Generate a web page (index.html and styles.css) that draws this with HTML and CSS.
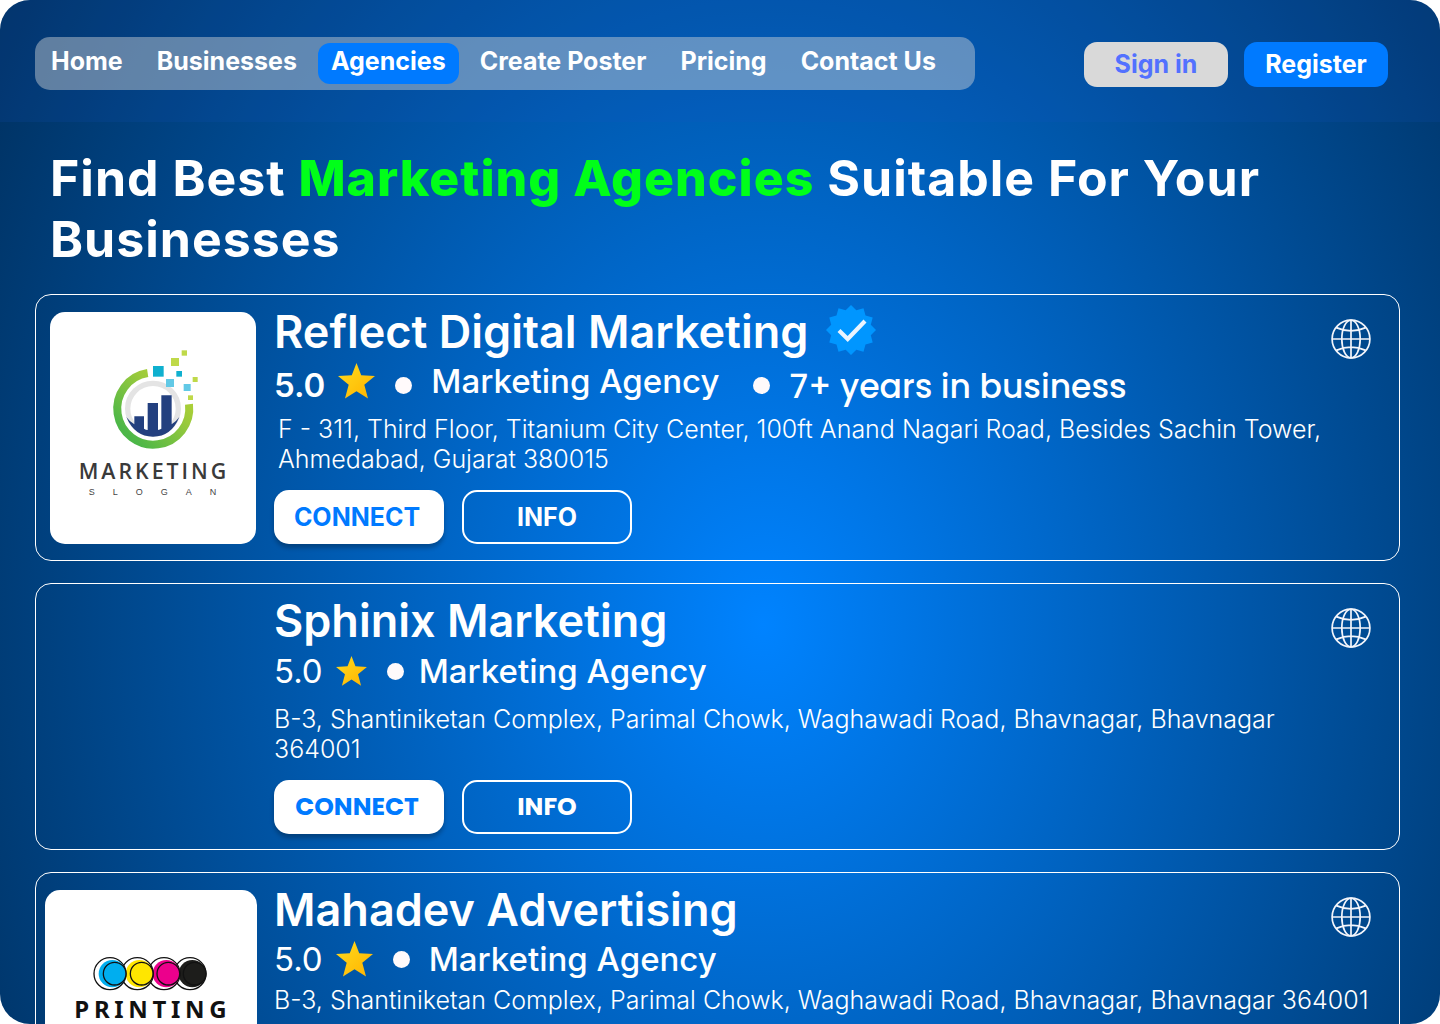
FILE: index.html
```html
<!DOCTYPE html>
<html lang="en">
<head>
<meta charset="utf-8">
<meta name="viewport" content="width=device-width, initial-scale=1">
<title>Marketing Agencies</title>
<link rel="stylesheet" href="styles.css">
</head>
<body>
<svg class="defs" aria-hidden="true">
  <defs>
    <linearGradient id="gold" x1="0" y1="0" x2="1" y2="1">
      <stop offset="0" stop-color="#ffdc1e"/>
      <stop offset="1" stop-color="#ffb200"/>
    </linearGradient>
    <linearGradient id="lime" x1="0.2" y1="0.9" x2="0.9" y2="0.2">
      <stop offset="0" stop-color="#4db748"/>
      <stop offset="0.7" stop-color="#9bca3c"/>
      <stop offset="1" stop-color="#b0d136"/>
    </linearGradient>
    <symbol id="star" viewBox="0 0 36 35">
      <path d="M18 0L22.6 12L36 12.7L25.6 21.2L29.2 34.6L18 27.4L6.8 34.6L10.4 21.2L0 12.7L13.4 12Z" fill="url(#gold)"/>
    </symbol>
    <symbol id="globe" viewBox="0 0 40 40">
      <g fill="none" stroke="#f3f5fb" stroke-width="1.7">
        <circle cx="20" cy="20" r="18.9"/>
        <ellipse cx="20" cy="20" rx="9.2" ry="18.9"/>
        <path d="M20 1V39M1 20H39M5.3 8.6Q20 15.2 34.7 8.6M5.3 31.4Q20 24.8 34.7 31.4"/>
      </g>
    </symbol>
  </defs>
</svg>
<div class="screen">
  <header class="header">
    <nav class="nav">
      <a href="#">Home</a>
      <a href="#">Businesses</a>
      <a href="#" class="active" aria-current="page">Agencies</a>
      <a href="#">Create Poster</a>
      <a href="#">Pricing</a>
      <a href="#">Contact Us</a>
    </nav>
    <div class="account">
      <button class="account-btn signin" type="button">Sign in</button>
      <button class="account-btn register" type="button">Register</button>
    </div>
  </header>
  <main class="main">
    <h1>Find Best <strong>Marketing Agencies</strong> Suitable For Your Businesses</h1>

    <article class="card">
      <div class="media">
        <svg class="logo" viewBox="30 36 618 696" role="img" aria-label="Marketing logo">
          <path d="M323 219.200A108 108 0 1 0 447 313" fill="none" stroke="url(#lime)" stroke-width="24"/>
          <circle cx="339" cy="326" r="76" fill="none" stroke="#e4e4e4" stroke-width="16"/>
          <path d="M259 351Q270 366 283 373V349H312V386Q318 390 323 390V309H354V390Q360 389 364 386V286H395V373Q408 365 418 351Q394 410 339 410Q284 410 259 351Z" fill="#23407f"/>
          <g fill="#0fb0cf"><rect x="339" y="198" width="32" height="32"/><rect x="409" y="213" width="17" height="17"/></g>
          <g fill="#62c9e6"><rect x="378" y="237" width="24" height="24"/><rect x="431" y="252" width="21" height="21"/></g>
          <g fill="#bfd949"><rect x="393" y="174" width="24" height="24"/><rect x="425" y="151" width="16" height="16"/><rect x="458" y="231" width="15" height="15"/><rect x="444" y="286" width="15" height="14"/></g>
          <text class="logo-word" x="116" y="538">MARKETING</text>
          <text class="logo-slogan" x="146" y="584">SLOGAN</text>
        </svg>
      </div>
      <div class="body">
        <div class="head">
          <h2>Reflect Digital Marketing</h2>
          <svg class="badge" viewBox="0 0 50 50" role="img" aria-label="Verified">
            <path d="M25 0L30.300 5.200L37.500 3.300L39.500 10.500L46.700 12.500L44.800 19.700L50 25L44.800 30.300L46.700 37.500L39.500 39.500L37.500 46.700L30.300 44.800L25 50L19.700 44.800L12.500 46.700L10.500 39.500L3.300 37.500L5.200 30.300L0 25L5.200 19.700L3.300 12.500L10.500 10.500L12.500 3.300L19.700 5.200Z" fill="#0096ff"/>
            <path d="M13 25.500L21.700 34L39 16" fill="none" stroke="#e9f4ff" stroke-width="4.200"/>
          </svg>
          <a class="site" href="#" aria-label="Website"><svg><use href="#globe"/></svg></a>
        </div>
        <div class="meta">
          <span class="rating low strong">5.0</span>
          <svg class="star"><use href="#star"/></svg>
          <span class="dot low"></span>
          <span class="kind">Marketing Agency</span>
          <span class="dot low second"></span>
          <span class="years">7+ years in business</span>
        </div>
        <p class="address inset">F - 311, Third Floor, Titanium City Center, 100ft Anand Nagari Road, Besides Sachin Tower, Ahmedabad, Gujarat 380015</p>
        <div class="actions">
          <button class="btn connect" type="button">CONNECT</button>
          <button class="btn info" type="button">INFO</button>
        </div>
      </div>
    </article>

    <article class="card">
      <div class="media"></div>
      <div class="body">
        <div class="head">
          <h2>Sphinix Marketing</h2>
          <a class="site" href="#" aria-label="Website"><svg><use href="#globe"/></svg></a>
        </div>
        <div class="meta tight">
          <span class="rating">5.0</span>
          <svg class="star small"><use href="#star"/></svg>
          <span class="dot"></span>
          <span class="kind">Marketing Agency</span>
        </div>
        <p class="address narrow">B-3, Shantiniketan Complex, Parimal Chowk, Waghawadi Road, Bhavnagar, Bhavnagar 364001</p>
        <div class="actions">
          <button class="btn connect geometric" type="button">CONNECT</button>
          <button class="btn info geometric" type="button">INFO</button>
        </div>
      </div>
    </article>

    <article class="card">
      <div class="media wide">
        <svg class="logo" viewBox="45 90 636 696" role="img" aria-label="Printing logo">
          <g stroke="#111" stroke-width="4">
            <circle cx="480" cy="341" r="48" fill="#fff"/>
            <circle cx="487" cy="341" r="41" fill="#1d1d1b" stroke="none"/>
            <circle cx="494" cy="341" r="34" fill="none"/>
            <circle cx="402" cy="341" r="48" fill="none"/>
            <circle cx="409" cy="341" r="41" fill="#ec008c" stroke="none"/>
            <circle cx="415" cy="341" r="34" fill="none"/>
            <circle cx="322" cy="341" r="48" fill="none"/>
            <circle cx="328" cy="341" r="41" fill="#ffe600" stroke="none"/>
            <circle cx="335" cy="341" r="34" fill="none"/>
            <circle cx="240" cy="341" r="48" fill="none"/>
            <circle cx="247" cy="341" r="41" fill="#00aeef" stroke="none"/>
            <circle cx="254" cy="341" r="34" fill="none"/>
          </g>
          <text class="logo-print" x="133" y="473">PRINTING</text>
        </svg>
      </div>
      <div class="body">
        <div class="head">
          <h2>Mahadev Advertising</h2>
          <a class="site" href="#" aria-label="Website"><svg><use href="#globe"/></svg></a>
        </div>
        <div class="meta">
          <span class="rating">5.0</span>
          <svg class="star"><use href="#star"/></svg>
          <span class="dot"></span>
          <span class="kind">Marketing Agency</span>
        </div>
        <p class="address close">B-3, Shantiniketan Complex, Parimal Chowk, Waghawadi Road, Bhavnagar, Bhavnagar 364001</p>
      </div>
    </article>
  </main>
</div>
</body>
</html>
```
FILE: styles.css
```css
* {
  box-sizing: border-box;
}

body {
  margin: 0;
  background: #fff;
  color: #fff;
  font-family: Inter, "Liberation Sans", sans-serif;
}

a {
  color: inherit;
  text-decoration: none;
}

button {
  border: 0;
  padding: 0;
  font: inherit;
  cursor: pointer;
}

.defs {
  position: absolute;
  width: 0;
  height: 0;
}

.screen {
  height: 100vh;
  overflow: hidden auto;
  scrollbar-width: none;
  border-radius: 30px;
  background: radial-gradient(910px 1190px at 53% 61%, #0083ff, #002f5d);
}

.header {
  display: flex;
  justify-content: space-between;
  align-items: flex-start;
  height: 122px;
  padding: 37px 52px 0 35px;
  background: rgba(20, 85, 200, 0.14);
  font-size: 25px;
  font-weight: 700;
}

.nav {
  display: flex;
  gap: 34px;
  padding: 6px 39px 6px 16px;
  border-radius: 15px;
  background: rgba(217, 217, 217, 0.44);
  white-space: nowrap;
}

.nav a {
  line-height: 37px;
  padding-bottom: 4px;
}

.nav .active {
  margin: 0 -13px;
  padding: 0 13px 4px;
  border-radius: 12px;
  background: #007aff;
}

.account {
  display: flex;
  gap: 16px;
  padding-top: 5px;
}

.account-btn {
  width: 144px;
  height: 45px;
  padding-bottom: 2px;
  border-radius: 13px;
}

.signin {
  background: #d9d9d9;
  color: #5271ff;
}

.register {
  background: #007aff;
  color: #fff;
}

.main {
  padding: 26px 40px 22px 35px;
  display: flex;
  flex-direction: column;
  gap: 22px;
}

h1 {
  margin: 0 0 2px;
  padding-left: 15px;
  font-size: 50px;
  line-height: 61px;
  font-weight: 700;
  letter-spacing: 1px;
}

h1 strong {
  font-weight: 800;
  color: #00ff19;
}

.card {
  display: grid;
  grid-template-columns: 238px 1fr;
  min-height: 267px;
  border: 1px solid #fff;
  border-radius: 16px;
}

.media {
  padding: 17px 18px 0 14px;
}

.media.wide {
  padding: 17px 17px 0 9px;
}

.logo {
  display: block;
  width: 100%;
  height: 232px;
  border-radius: 15px;
  background: #fff;
}

.logo-word {
  font: 600 64px "Open Sans", sans-serif;
  letter-spacing: 9px;
  fill: #3a3a3a;
}

.logo-slogan {
  font: 27px "Liberation Sans", sans-serif;
  letter-spacing: 54px;
  fill: #444;
}

.logo-print {
  font: 700 72px "Noto Sans", sans-serif;
  letter-spacing: 14px;
  fill: #111;
}

.body {
  padding: 10px 28px 0 0;
}

.head {
  display: flex;
  align-items: flex-start;
}

h2 {
  margin: 0;
  font-size: 45px;
  line-height: 54px;
  font-weight: 600;
}

.badge {
  width: 50px;
  height: 50px;
  margin-left: 18px;
}

.site {
  margin: 14px 0 0 auto;
  height: 40px;
}

.site svg {
  display: block;
  width: 40px;
  height: 40px;
}

.meta {
  display: flex;
  align-items: center;
  margin-top: 2px;
  height: 40px;
  font-size: 33px;
  line-height: 40px;
  font-weight: 500;
}

.meta.tight {
  margin-top: 3px;
}

.rating {
  font-weight: 400;
}

.rating.strong {
  font-weight: 600;
}

.low {
  margin-top: 8px;
}

.star {
  width: 37px;
  height: 36px;
  margin: 0 20px 0 13px;
}

.star.small {
  width: 31px;
  height: 30px;
}

.dot {
  width: 17px;
  height: 17px;
  border-radius: 50%;
  background: #fffafb;
}

.dot.second {
  margin-left: 34px;
}

.kind,
.years {
  margin-left: 19px;
}

.tight .kind {
  margin-left: 15px;
}

.years {
  margin-top: 12px;
  font-family: Poppins, Inter, sans-serif;
}

.address {
  margin: 13px 0 0;
  font-size: 25px;
  line-height: 30px;
  font-weight: 300;
}

.address.inset {
  padding-left: 4px;
}

.address.narrow {
  max-width: 1060px;
}

.address.close {
  margin-top: 6px;
}

.actions {
  display: flex;
  gap: 18px;
  margin-top: 16px;
}

.btn {
  width: 170px;
  height: 54px;
  border-radius: 15px;
  font-size: 25px;
  font-weight: 700;
}

.connect {
  padding-right: 4px;
  background: #fff;
  color: #007aff;
  box-shadow: 0 4px 4px rgba(0, 0, 0, 0.25);
}

.info {
  border: 2px solid #fff;
  background: transparent;
  color: #fff;
}

.geometric {
  font-family: Poppins, Inter, sans-serif;
}
```
